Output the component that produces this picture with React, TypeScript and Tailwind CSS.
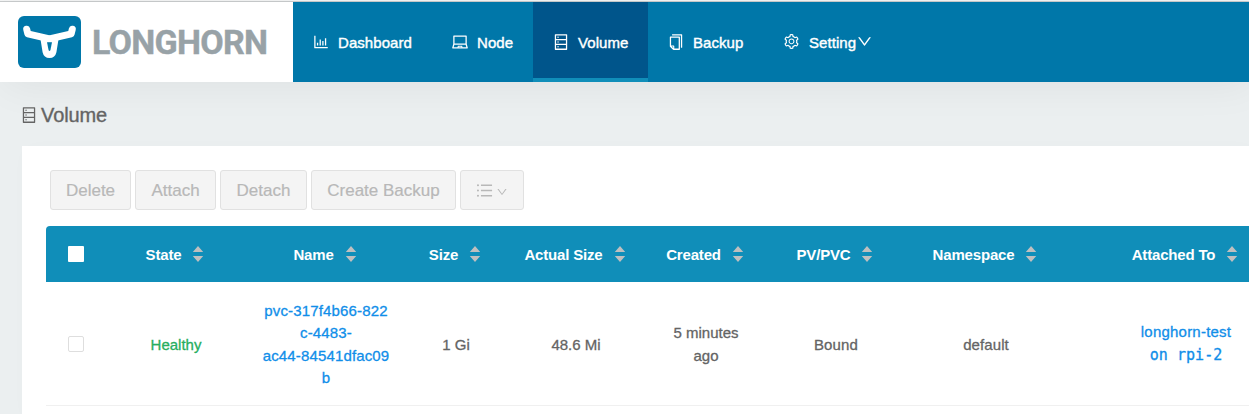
import React from "react";
import {
  AiOutlineBarChart,
  AiOutlineLaptop,
  AiOutlineDatabase,
  AiOutlineCopy,
  AiOutlineSetting,
  AiOutlineDown,
  AiOutlineUnorderedList,
} from "react-icons/ai";

const navItems = [
  { label: "Dashboard", Icon: AiOutlineBarChart, width: "w-[139px]", active: false },
  { label: "Node", Icon: AiOutlineLaptop, width: "w-[101px]", active: false },
  { label: "Volume", Icon: AiOutlineDatabase, width: "w-[115px]", active: true },
  { label: "Backup", Icon: AiOutlineCopy, width: "w-[116px]", active: false },
];

const buttons = [
  { label: "Delete", width: "w-[81px]" },
  { label: "Attach", width: "w-[81px]" },
  { label: "Detach", width: "w-[87px]" },
  { label: "Create Backup", width: "w-[145px]" },
];

const columns = ["State", "Name", "Size", "Actual Size", "Created", "PV/PVC", "Namespace", "Attached To"];

const grid = "grid grid-cols-[60px_140px_160px_100px_140px_120px_140px_160px_240px] w-[1260px]";

function Logo() {
  return (
    <div className="flex h-20 w-[293px] shrink-0 items-center bg-white pl-[18px]">
      <svg width="63" height="52" viewBox="0 0 63 52" className="shrink-0">
        <rect width="63" height="52" rx="6" fill="#0077a9" />
        <g fill="none" stroke="#fff" strokeLinecap="round" strokeLinejoin="round">
          <path d="M8.7 13.2 L9.8 17.8 L31.5 22.8 L53.2 17.8 L54.3 13.2" strokeWidth="7" />
          <path d="M26 23 L28 35.5 Q28.7 38.6 31.5 38.6 Q34.3 38.6 35 35.5 L37 23" strokeWidth="7" />
        </g>
        <path d="M28.6 26.2 H34.4 L32.9 34 Q31.5 36 30.1 34 Z" fill="#fff" />
        <path d="M29 26.2 H34 L32.4 34.2 Q31.5 35.6 30.6 34.2 Z" fill="#0077a9" />
      </svg>
      <span className="ml-[11px] font-[Roboto] text-[34px] leading-none font-bold tracking-[-0.75px] text-[#98a2a7] [-webkit-text-stroke:0.4px_#98a2a7]">
        LONGHORN
      </span>
    </div>
  );
}

function Sorter() {
  return (
    <svg width="12" height="16" viewBox="0 0 12 16" className="relative -top-px ml-[11px] shrink-0" fill="#bfbfbf">
      <path d="M6 0 L11.2 6 H0.8 Z M6 16 L11.2 10 H0.8 Z" />
    </svg>
  );
}

export default function App() {
  return (
    <div className="h-[414px] w-full overflow-hidden bg-[#ebeff0] font-['Liberation_Sans',sans-serif] text-[15px] text-[#646464]">
      <div className="h-0.5 border-b border-[#c9cccd] bg-[#f4f5f5]" />
      <header className="flex h-20 bg-[#0077a9] shadow-[4px_4px_40px_0_rgba(0,0,0,0.06)]">
        <Logo />
        <nav className="flex text-white [-webkit-text-stroke:0.4px_white]">
          {navItems.map(({ label, Icon, width, active }) => (
            <div
              key={label}
              className={`flex h-20 items-center border-b-4 pt-[3px] pl-[18.5px] ${width} ${
                active ? "border-[#108eb9] bg-[#00558b]" : "border-transparent"
              }`}
            >
              <Icon size={18} strokeWidth={0} className="mr-[8.5px] shrink-0" />
              <span className="pt-[3px] tracking-[0.06px]">{label}</span>
            </div>
          ))}
          <div className="flex h-20 items-center border-b-4 border-transparent pt-[3px] pl-[18.5px]">
            <AiOutlineSetting size={17} strokeWidth={0} className="mr-[9.5px]" />
            <span className="pt-[3px] tracking-[0.06px]">Setting</span>
            <AiOutlineDown size={17} strokeWidth={0} />
          </div>
        </nav>
      </header>

      <div className="flex h-16 items-center pl-5 pt-[2px] text-xl">
        <AiOutlineDatabase size={18} className="mr-[3px]" />
        <h1 className="tracking-[-0.1px] [-webkit-text-stroke:0.35px_#646464]">Volume</h1>
      </div>

      <main className="ml-[22px] h-[268px] overflow-hidden bg-white pl-6 pt-6 shadow-[4px_4px_20px_0_rgba(0,0,0,0.02)]">
        <div className="ml-1 flex gap-1 text-[17px] text-[#b8b8b8]">
          {buttons.map(({ label, width }) => (
            <button
              key={label}
              disabled
              className={`h-10 rounded-[3px] border border-[#e1e1e1] bg-[#f4f4f4] pt-0.5 whitespace-nowrap [-webkit-text-stroke:0.2px_#b8b8b8] ${width}`}
            >
              {label}
            </button>
          ))}
          <button disabled className="flex h-10 w-16 items-center justify-center rounded-[3px] border border-[#e1e1e1] bg-[#f4f4f4] pr-px">
            <AiOutlineUnorderedList size={19} />
            <AiOutlineDown size={12} className="ml-[2px] mt-[3px]" />
          </button>
        </div>

        <div className={`mt-4 h-14 items-center rounded-tl bg-[#108eb9] font-bold text-white ${grid}`}>
          <span className="mx-auto size-4 rounded-[1px] bg-white" />
          {columns.map((c) => (
            <div key={c} className="flex items-center justify-center pt-[2px] pr-[2px] text-[15px] tracking-[-0.18px]">
              <span>{c}</span>
              <Sorter />
            </div>
          ))}
        </div>

        <div className={`h-[124px] items-center border-b border-[#f0f0f0] text-center leading-[22.5px] [-webkit-text-stroke:0.3px_currentColor] ${grid}`}>
          <span className="mx-auto size-4 rounded-[2px] border border-[#dedede] bg-white" />
          <span className="pt-[3px] text-[#27ae60]">Healthy</span>
          <a className="pt-0.5 tracking-[0.15px] text-[#108ee9]">
            pvc-317f4b66-822
            <br />
            c-4483-
            <br />
            ac44-84541dfac09
            <br />b
          </a>
          <span className="pt-[3px]">1 Gi</span>
          <span className="pt-[3px]">48.6 Mi</span>
          <span className="pt-0.5">
            5 minutes
            <br />
            ago
          </span>
          <span className="pt-[3px] tracking-[0.15px]">Bound</span>
          <span className="pt-[3px] tracking-[0.1px]">default</span>
          <a className="tracking-[0.22px] text-[#108ee9]">
            longhorn-test
            <br />
            <span className="font-['DejaVu_Sans_Mono',monospace] tracking-[0.05px]">on rpi-2</span>
          </a>
        </div>
      </main>
    </div>
  );
}
